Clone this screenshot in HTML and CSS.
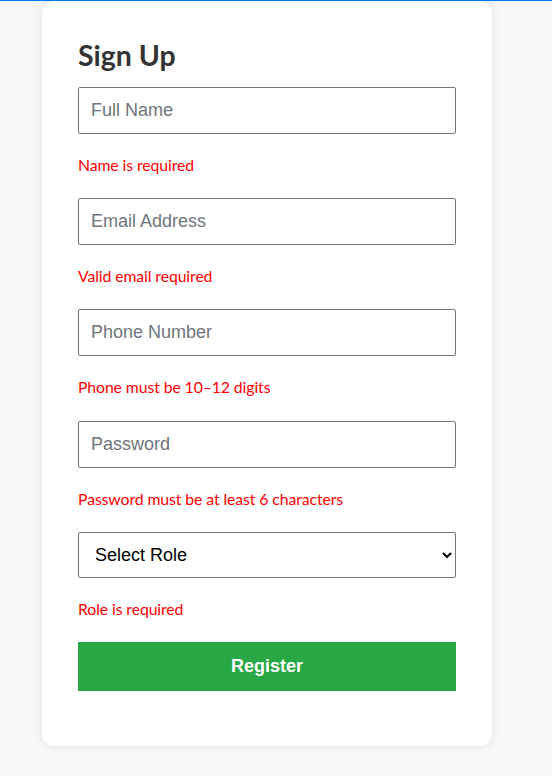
FILE: index.html
```html
<!DOCTYPE html>
<html lang="en">
<head>
<meta charset="utf-8">
<title>Sign Up</title>
<link rel="stylesheet" href="styles.css">
</head>
<body>
<div class="topline"></div>
<main class="page">
  <form class="card" novalidate>
    <h2 class="title">Sign Up</h2>
    <input class="field" type="text" placeholder="Full Name">
    <p class="error">Name is required</p>
    <input class="field" type="email" placeholder="Email Address">
    <p class="error">Valid email required</p>
    <input class="field" type="tel" placeholder="Phone Number">
    <p class="error">Phone must be 10–12 digits</p>
    <input class="field" type="password" placeholder="Password">
    <p class="error">Password must be at least 6 characters</p>
    <select class="field select">
      <option>Select Role</option>
      <option>User</option>
      <option>Admin</option>
    </select>
    <p class="error">Role is required</p>
    <button class="btn" type="button">Register</button>
  </form>
</main>
</body>
</html>
```
FILE: styles.css
```css
html, body {
  margin: 0;
  padding: 0;
}
body {
  background: #f8f8f8;
  font-family: Lato, "Noto Sans", sans-serif;
  height: 776px;
  overflow: hidden;
}
.topline {
  height: 1px;
  background: #0a78f0;
}
.page {
  padding-left: 42px;
}
.card {
  width: 450px;
  box-sizing: border-box;
  background: #fff;
  border-radius: 12px;
  box-shadow: 0 0 10px rgba(0, 0, 0, 0.1);
  padding: 38px 36px 55px;
  display: flex;
  flex-direction: column;
}
.title {
  margin: 0 0 15px;
  font-size: 28.5px;
  line-height: 33px;
  font-weight: 700;
  color: #333;
}
.field {
  box-sizing: border-box;
  height: 47px;
  width: 100%;
  margin: 0;
  padding: 0 12px;
  border: 1px solid #767676;
  border-radius: 2px;
  font-family: "Liberation Sans", Arial, sans-serif;
  font-size: 18px;
  color: #000;
  background: #fff;
}
.field::placeholder {
  color: #6f757c;
}
.select {
  height: 46px;
  padding: 0 12px;
}
.error {
  margin: 21px 0 24.2px;
  font-size: 15.8px;
  line-height: 19px;
  letter-spacing: -0.1px;
  color: #ff0000;
}
.btn {
  height: 49px;
  margin: 0;
  border: none;
  background: #28a745;
  color: #fff;
  font-family: "Liberation Sans", Arial, sans-serif;
  font-size: 18px;
  font-weight: 700;
  cursor: pointer;
}
```
